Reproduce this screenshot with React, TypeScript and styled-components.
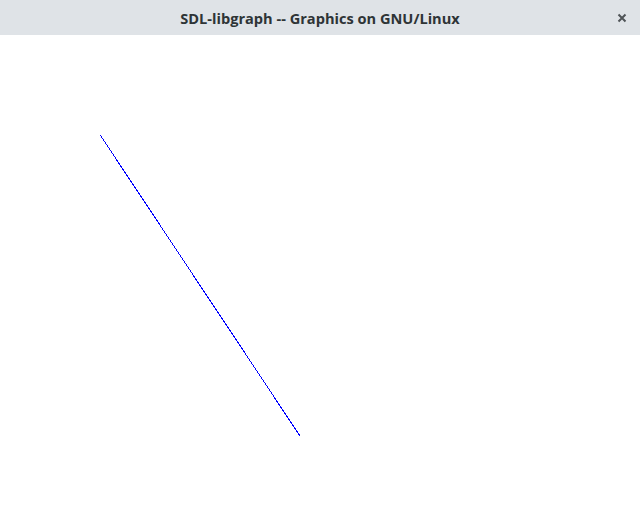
import React from "react";
import styled, { createGlobalStyle } from "styled-components";

const Global = createGlobalStyle`
  html, body { margin: 0; padding: 0; background: #ffffff; }
  #root { width: 640px; height: 516px; }
`;

const Window = styled.div`
  width: 640px;
  height: 516px;
  display: flex;
  flex-direction: column;
  background: #ffffff;
`;

const TitleBar = styled.div`
  height: 35px;
  flex: 0 0 35px;
  background: #dfe3e7;
  display: flex;
  align-items: center;
  justify-content: center;
  position: relative;
  box-sizing: border-box;
`;

const Title = styled.span`
  font-family: "Open Sans", "Noto Sans", sans-serif;
  font-weight: 700;
  font-size: 14.6px;
  color: #2e3436;
  margin-top: 1px;
`;

const CloseButton = styled.div`
  position: absolute;
  left: 617px;
  top: 13px;
  width: 10px;
  height: 10px;
  display: flex;
  align-items: center;
  justify-content: center;
`;

const Canvas = styled.svg`
  display: block;
  width: 640px;
  height: 481px;
`;

export default function App() {
  return (
    <>
      <Global />
      <Window>
        <TitleBar>
          <Title>SDL-libgraph -- Graphics on GNU/Linux</Title>
          <CloseButton>
            <svg width="10" height="10" viewBox="0 0 10 10">
              <path d="M1.5 1.5 L8.5 8.5 M8.5 1.5 L1.5 8.5" stroke="#4f5457" strokeWidth="2" />
            </svg>
          </CloseButton>
        </TitleBar>
        <Canvas viewBox="0 0 640 481">
          <line x1="100.5" y1="100.5" x2="300" y2="401" stroke="#0000ff" strokeWidth="1" shapeRendering="crispEdges" />
        </Canvas>
      </Window>
    </>
  );
}
